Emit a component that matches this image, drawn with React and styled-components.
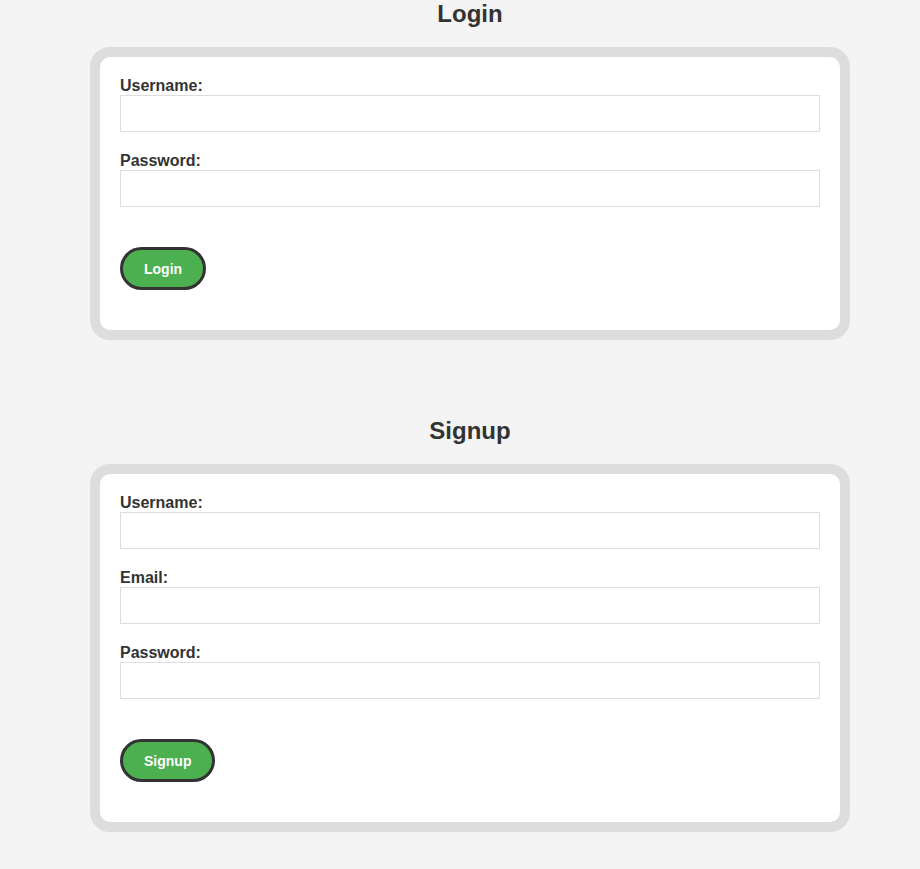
import styled, { createGlobalStyle } from "styled-components";

const GlobalStyle = createGlobalStyle`
    html, body {
        margin: 0;
        padding: 0;
        background: #f4f4f4;
        font-family: "Liberation Sans", Arial, sans-serif;
        color: #333;
    }
`;

const Page = styled.div`
    display: flex;
    flex-direction: column;
    gap: 77px;
    width: 760px;
    margin-left: 90px;
    padding-bottom: 38px;
`;

const Section = styled.section`
    display: flex;
    flex-direction: column;
`;

const Title = styled.h2`
    margin: 0 0 19px;
    font-size: 24px;
    line-height: 28px;
    font-weight: bold;
    text-align: center;
    color: #333;
`;

const Card = styled.form`
    display: flex;
    flex-direction: column;
    background: #fff;
    border: 10px solid #ddd;
    border-radius: 20px;
    padding: 20px;
`;

const Label = styled.label`
    display: block;
    font-size: 16px;
    line-height: 18px;
    font-weight: bold;
    color: #333;
`;

const Input = styled.input`
    box-sizing: border-box;
    width: 100%;
    height: 37px;
    margin: 0 0 20px;
    padding: 8px;
    border: 1px solid #ddd;
    background: #fff;
    font-family: inherit;
    font-size: 16px;
    outline: none;
`;

const Button = styled.button`
    align-self: flex-start;
    margin: 20px 0;
    height: 43px;
    padding: 0 21px;
    background: #4caf50;
    color: #fff;
    border: 3px solid #333;
    border-radius: 999px;
    font-family: inherit;
    font-size: 14px;
    font-weight: bold;
    cursor: pointer;
`;

function Field({ label, type = "text" }) {
    return (
        <>
            <Label>{label}</Label>
            <Input type={type} />
        </>
    );
}

export default function App() {
    return (
        <>
            <GlobalStyle />
            <Page>
                <Section>
                    <Title>Login</Title>
                    <Card onSubmit={(e) => e.preventDefault()}>
                        <Field label="Username:" />
                        <Field label="Password:" type="password" />
                        <Button type="submit">Login</Button>
                    </Card>
                </Section>

                <Section>
                    <Title>Signup</Title>
                    <Card onSubmit={(e) => e.preventDefault()}>
                        <Field label="Username:" />
                        <Field label="Email:" type="email" />
                        <Field label="Password:" type="password" />
                        <Button type="submit">Signup</Button>
                    </Card>
                </Section>
            </Page>
        </>
    );
}
